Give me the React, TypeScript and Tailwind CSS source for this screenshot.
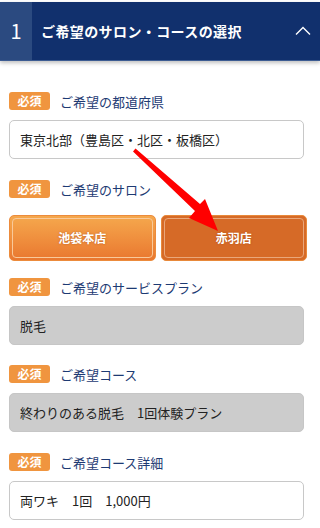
import React from "react";

const font = { fontFamily: '"Noto Sans CJK JP", "Noto Sans", sans-serif' };

function Badge() {
  return (
    <span className="flex h-[18px] w-[41px] items-center justify-center rounded-[3px] bg-[#f0953f] text-[12px] font-bold leading-none text-white">
      必須
    </span>
  );
}

function Label({ text }: { text: string }) {
  return (
    <div className="flex h-[18px] items-center gap-[10px]">
      <Badge />
      <span className="text-[13px] leading-none text-[#1d3a73]">{text}</span>
    </div>
  );
}

function Box({ text, gray }: { text: string; gray?: boolean }) {
  return (
    <div
      className={
        "mt-[10px] flex h-[39px] w-[295px] items-center rounded-[5px] border px-[10px] text-[13px] text-[#222] " +
        (gray ? "border-[#c6c6c6] bg-[#cccccc]" : "border-[#c8c8c8] bg-white")
      }
    >
      {text}
    </div>
  );
}

export default function App() {
  return (
    <div className="relative h-[528px] w-[320px] overflow-hidden bg-white" style={font}>
      <div className="pt-[2px]">
        <div className="flex h-[59px] bg-[#11306d] shadow-[0_2px_4px_rgba(0,0,0,0.25)] border-b border-[#3d5c92]">
          <div className="flex w-[32px] items-center justify-center bg-[#2b4a80] text-[20px] text-white">1</div>
          <div className="flex flex-1 items-center pl-[9px] text-[14px] font-bold tracking-[0.4px] text-white">
            ご希望のサロン・コースの選択
          </div>
          <div className="flex w-[34px] items-center justify-center">
            <svg width="16" height="10" viewBox="0 0 16 10">
              <path d="M1 8.5 L8 1.5 L15 8.5" fill="none" stroke="#ffffff" strokeWidth="1.4" />
            </svg>
          </div>
        </div>
      </div>

      <div className="pl-[9px] pt-[31px]">
        <Label text="ご希望の都道府県" />
        <Box text="東京北部（豊島区・北区・板橋区）" />

        <div className="mt-[21px]">
          <Label text="ご希望のサロン" />
        </div>
        <div className="mt-[17px] grid w-[298px] grid-cols-2 gap-[5px]">
          <div className="h-[46px] rounded-[5px] border border-[#ec8b3c] bg-gradient-to-b from-[#f5a84d] to-[#e9772f] p-[2px]">
            <div className="flex h-full items-center justify-center rounded-[4px] border border-[#f9c99a] text-[12px] font-bold text-white [text-shadow:0_0_2px_rgba(150,60,0,0.6)]">
              池袋本店
            </div>
          </div>
          <div className="h-[46px] rounded-[5px] border border-[#e8893a] bg-[#d66a27] p-[2px]">
            <div className="flex h-full items-center justify-center rounded-[4px] border border-[#eaa77a] text-[12px] font-bold text-white [text-shadow:0_0_2px_rgba(150,60,0,0.6)]">
              赤羽店
            </div>
          </div>
        </div>

        <div className="mt-[17px]">
          <Label text="ご希望のサービスプラン" />
        </div>
        <Box text="脱毛" gray />

        <div className="mt-[20px]">
          <Label text="ご希望コース" />
        </div>
        <Box text="終わりのある脱毛　1回体験プラン" gray />

        <div className="mt-[21px]">
          <Label text="ご希望コース詳細" />
        </div>
        <Box text="両ワキ　1回　1,000円" />
      </div>

      <svg className="pointer-events-none absolute left-0 top-0" width="320" height="528" viewBox="0 0 320 528">
        <polygon
          points="133,151.5 135.5,148.5 200,204 205,199 218,231 189,218 195,211"
          fill="#ff0000"
        />
      </svg>
    </div>
  );
}
